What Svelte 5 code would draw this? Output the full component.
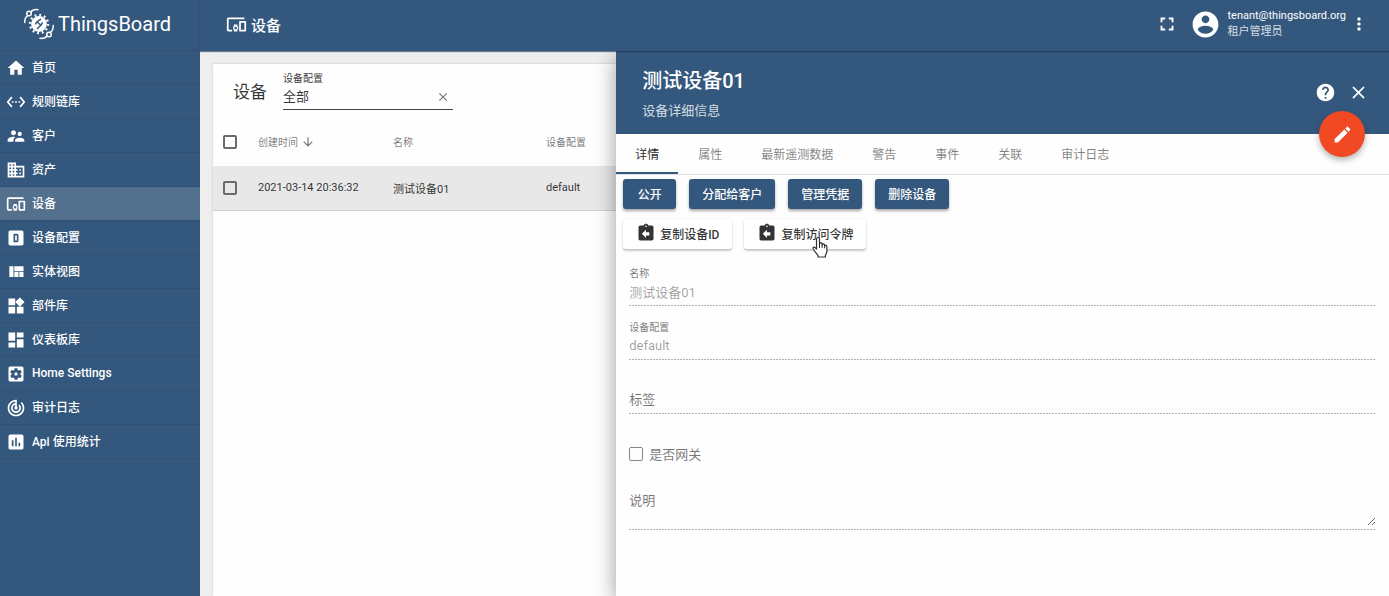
<script>
  const icons = {
    home: 'M10 20v-6h4v6h5v-8h3L12 3 2 12h3v8z',
    chains: 'M7.77 6.76L6.23 5.48.82 12l5.41 6.52 1.54-1.28L3.42 12l4.35-5.24zM7 13h2v-2H7v2zm10-2h-2v2h2v-2zm-6 2h2v-2h-2v2zm6.77-7.52l-1.54 1.28L20.58 12l-4.35 5.24 1.54 1.28L23.18 12l-5.41-6.52z',
    people: 'M16.5 12c1.38 0 2.49-1.12 2.49-2.5S17.88 7 16.5 7C15.12 7 14 8.12 14 9.5s1.12 2.5 2.5 2.5zM9 11c1.66 0 2.99-1.34 2.99-3S10.66 5 9 5C7.34 5 6 6.34 6 8s1.34 3 3 3zm7.5 3c-1.83 0-5.5.92-5.5 2.75V19h11v-2.25c0-1.83-3.67-2.75-5.5-2.75zM9 13c-2.33 0-7 1.17-7 3.5V19h7v-2.25c0-.85.33-2.34 2.37-3.47C10.5 13.1 9.66 13 9 13z',
    domain: 'M12 7V3H2v18h20V7H12zM6 19H4v-2h2v2zm0-4H4v-2h2v2zm0-4H4V9h2v2zm0-4H4V5h2v2zm4 12H8v-2h2v2zm0-4H8v-2h2v2zm0-4H8V9h2v2zm0-4H8V5h2v2zm10 12h-8v-2h2v-2h-2v-2h2v-2h-2V9h8v10zm-2-8h-2v2h2v-2zm0 4h-2v2h2v-2z',
    devices: 'M3 6h18V4H3c-1.1 0-2 .9-2 2v12c0 1.1.9 2 2 2h4v-2H3V6zm10 6H9v1.78c-.61.55-1 1.33-1 2.22s.39 1.67 1 2.22V20h4v-1.78c.61-.55 1-1.34 1-2.22s-.39-1.67-1-2.22V12zm-2 5.5c-.83 0-1.5-.67-1.5-1.5s.67-1.5 1.5-1.5 1.5.67 1.5 1.5-.67 1.5-1.5 1.5zM22 8h-6c-.5 0-1 .5-1 1v10c0 .5.5 1 1 1h6c.5 0 1-.5 1-1V9c0-.5-.5-1-1-1zm-1 10h-4v-8h4v8z',
    profile: 'M9 7v10h4a2 2 0 002-2V9a2 2 0 00-2-2H9zm2 2h2v6h-2V9zM5 3h14a2 2 0 012 2v14a2 2 0 01-2 2H5a2 2 0 01-2-2V5a2 2 0 012-2z',
    quilt: 'M10 18h5v-6h-5v6zm-6 0h5V5H4v13zm12 0h5v-6h-5v6zM10 5v6h11V5H10z',
    widgets: 'M13 13v8h8v-8h-8zM3 21h8v-8H3v8zM3 3v8h8V3H3zm13.66-1.31L11 7.34 16.66 13l5.66-5.66-5.66-5.65z',
    dashboard: 'M3 13h8V3H3v10zm0 8h8v-6H3v6zm10 0h8V11h-8v10zm0-18v6h8V3h-8z',
    settings: 'M12 10c-1.1 0-2 .9-2 2s.9 2 2 2 2-.9 2-2-.9-2-2-2zm7-7H5c-1.11 0-2 .9-2 2v14c0 1.1.89 2 2 2h14c1.11 0 2-.9 2-2V5c0-1.1-.89-2-2-2zm-1.75 9c0 .23-.02.46-.05.68l1.48 1.16c.13.11.17.3.08.45l-1.4 2.42c-.09.15-.27.21-.43.15l-1.74-.7c-.36.28-.76.51-1.18.69l-.26 1.85c-.03.17-.18.3-.35.3h-2.8c-.17 0-.32-.13-.35-.29l-.26-1.85c-.43-.18-.82-.41-1.18-.69l-1.74.7c-.16.06-.34 0-.43-.15l-1.4-2.42c-.09-.15-.05-.34.08-.45l1.48-1.16c-.03-.23-.05-.46-.05-.69 0-.23.02-.46.05-.68l-1.48-1.16c-.13-.11-.17-.3-.08-.45l1.4-2.42c.09-.15.27-.21.43-.15l1.74.7c.36-.28.76-.51 1.18-.69l.26-1.85c.03-.17.18-.3.35-.3h2.8c.17 0 .32.13.35.29l.26 1.85c.43.18.82.41 1.18.69l1.74-.7c.16-.06.34 0 .43.15l1.4 2.42c.09.15.05.34-.08.45l-1.48 1.16c.03.23.05.46.05.69z',
    track: 'M19.07 4.93l-1.41 1.41C19.1 7.79 20 9.79 20 12c0 4.42-3.58 8-8 8s-8-3.58-8-8c0-4.08 3.05-7.44 7-7.93v2.02C8.16 6.57 6 9.03 6 12c0 3.31 2.69 6 6 6s6-2.69 6-6c0-1.66-.67-3.16-1.76-4.24l-1.41 1.41C15.55 9.9 16 10.9 16 12c0 2.21-1.79 4-4 4s-4-1.79-4-4c0-1.86 1.28-3.41 3-3.86v2.14c-.6.35-1 .98-1 1.72 0 1.1.9 2 2 2s2-.9 2-2c0-.74-.4-1.38-1-1.72V2h-1C6.48 2 2 6.48 2 12s4.48 10 10 10 10-4.48 10-10c0-2.76-1.12-5.26-2.93-7.07z',
    chart: 'M19 3H5c-1.1 0-2 .9-2 2v14c0 1.1.9 2 2 2h14c1.1 0 2-.9 2-2V5c0-1.1-.9-2-2-2zM9 17H7v-7h2v7zm4 0h-2V7h2v10zm4 0h-2v-4h2v4z',
    fullscreen: 'M7 14H5v5h5v-2H7v-3zm-2-4h2V7h3V5H5v5zm12 7h-3v2h5v-5h-2v3zM14 5v2h3v3h2V5h-5z',
    account: 'M12 2C6.48 2 2 6.48 2 12s4.48 10 10 10 10-4.48 10-10S17.52 2 12 2zm0 3c1.66 0 3 1.34 3 3s-1.34 3-3 3-3-1.34-3-3 1.34-3 3-3zm0 14.2c-2.5 0-4.71-1.28-6-3.22.03-1.99 4-3.08 6-3.08 1.99 0 5.97 1.09 6 3.08-1.29 1.94-3.5 3.22-6 3.22z',
    more: 'M12 8c1.1 0 2-.9 2-2s-.9-2-2-2-2 .9-2 2 .9 2 2 2zm0 2c-1.1 0-2 .9-2 2s.9 2 2 2 2-.9 2-2-.9-2-2-2zm0 6c-1.1 0-2 .9-2 2s.9 2 2 2 2-.9 2-2-.9-2-2-2z',
    help: 'M12 2C6.48 2 2 6.48 2 12s4.48 10 10 10 10-4.48 10-10S17.52 2 12 2zm1 17h-2v-2h2v2zm2.07-7.75l-.9.92C13.45 12.9 13 13.5 13 15h-2v-.5c0-1.1.45-2.1 1.17-2.83l1.24-1.26c.37-.36.59-.86.59-1.41 0-1.1-.9-2-2-2s-2 .9-2 2H8c0-2.21 1.79-4 4-4s4 1.79 4 4c0 .88-.36 1.68-.93 2.25z',
    close: 'M19 6.41L17.59 5 12 10.59 6.41 5 5 6.41 10.59 12 5 17.59 6.41 19 12 13.41 17.59 19 19 17.59 13.41 12z',
    edit: 'M3 17.25V21h3.75L17.81 9.94l-3.75-3.75L3 17.25zM20.71 7.04c.39-.39.39-1.02 0-1.41l-2.34-2.34c-.39-.39-1.02-.39-1.41 0l-1.83 1.83 3.75 3.75 1.83-1.83z',
    copy: 'M19 3h-4.18C14.4 1.84 13.3 1 12 1c-1.3 0-2.4.84-2.82 2H5c-1.1 0-2 .9-2 2v14c0 1.1.9 2 2 2h14c1.1 0 2-.9 2-2V5c0-1.1-.9-2-2-2zm-7 0c.55 0 1 .45 1 1s-.45 1-1 1-1-.45-1-1 .45-1 1-1zm4 12h-4v3l-5-5 5-5v3h4v4z',
    down: 'M20 12l-1.41-1.41L13 16.17V4h-2v12.17l-5.58-5.59L4 12l8 8 8-8z'
  };

  const menu = [
    ['首页', 'home'],
    ['规则链库', 'chains'],
    ['客户', 'people'],
    ['资产', 'domain'],
    ['设备', 'devices'],
    ['设备配置', 'profile'],
    ['实体视图', 'quilt'],
    ['部件库', 'widgets'],
    ['仪表板库', 'dashboard'],
    ['Home Settings', 'settings'],
    ['审计日志', 'track'],
    ['Api 使用统计', 'chart']
  ];
  const tabs = ['详情', '属性', '最新遥测数据', '警告', '事件', '关联', '审计日志'];
  const actions = ['公开', '分配给客户', '管理凭据', '删除设备'];

  let activeMenu = $state('设备');
  let activeTab = $state('详情');
  let profileFilter = $state('全部');
</script>

{#snippet icon(name, size)}
  <svg class="icon" width={size} height={size} viewBox="0 0 24 24" aria-hidden="true">
    <path d={icons[name]} fill="currentColor" fill-rule={name === 'profile' ? 'evenodd' : 'nonzero'} />
  </svg>
{/snippet}

<div class="shell">
  <aside class="sidebar">
    <a class="brand" href="#home">
      <svg class="icon" width="32" height="32" viewBox="0 0 32 32" fill="none" stroke="currentColor" aria-hidden="true">
        <g stroke-width="1.5" stroke-linecap="round">
          <circle cx="6" cy="5.5" r="2.3" />
          <path d="M8 4C9.500 1.500 11.500 1.300 15 1.700M4.800 7.600C2.300 9 1.700 11 1.700 14.500" />
          <circle cx="26" cy="26.500" r="2.300" />
          <path d="M24 28C22.500 30.500 20.500 30.700 17 30.300M27.200 24.400C29.700 23 30.300 21 30.300 17.500" />
        </g>
        <circle cx="16" cy="16" r="9" stroke-width="2.400" stroke-dasharray="1.800 2.912" />
        <circle cx="16" cy="16" r="7.900" fill="currentColor" stroke="none" />
        <path d="M17.500 11.300l-3.600 2.500 3.900 3.500-3.300 3.200M13.900 13.800l-1.200 2M17.800 17.300l1.400-2.300" stroke="#34587d" stroke-width="1.500" stroke-linecap="round" stroke-linejoin="round" />
      </svg>
      <span>ThingsBoard</span>
    </a>
    <nav>
      {#each menu as [label, name]}
        <a href="#{name}" class:active={activeMenu === label} onclick={() => (activeMenu = label)}>
          {@render icon(name, 20)}
          <span>{label}</span>
        </a>
      {/each}
    </nav>
  </aside>

  <div class="main">
    <header class="topbar">
      <h1>{@render icon('devices', 21)}<span>设备</span></h1>
      <button class="plain" aria-label="全屏">{@render icon('fullscreen', 22)}</button>
      <div class="user">
        {@render icon('account', 31)}
        <div>
          <div>tenant@thingsboard.org</div>
          <div class="role">租户管理员</div>
        </div>
      </div>
      <button class="plain" aria-label="更多">{@render icon('more', 20)}</button>
    </header>

    <div class="content">
      <section class="card">
        <div class="toolbar">
          <h2>设备</h2>
          <div class="filter">
            <label for="filter">设备配置</label>
            <div class="filter-row">
              <input id="filter" type="text" bind:value={profileFilter} />
              <button class="plain" aria-label="清除" onclick={() => (profileFilter = '')}>{@render icon('close', 14)}</button>
            </div>
          </div>
        </div>
        <table>
          <colgroup><col class="c-check" /><col class="c-time" /><col class="c-name" /><col /></colgroup>
          <thead>
            <tr>
              <th><input type="checkbox" aria-label="全选" /></th>
              <th><span class="sorted">创建时间 {@render icon('down', 14)}</span></th>
              <th>名称</th>
              <th>设备配置</th>
            </tr>
          </thead>
          <tbody>
            <tr>
              <td><input type="checkbox" aria-label="选择 测试设备01" /></td>
              <td>2021-03-14 20:36:32</td>
              <td>测试设备01</td>
              <td>default</td>
            </tr>
          </tbody>
        </table>
      </section>

      <section class="drawer">
        <header class="drawer-head">
          <div class="titles">
            <h2>测试设备01</h2>
            <p>设备详细信息</p>
          </div>
          <button class="plain" aria-label="帮助">{@render icon('help', 21)}</button>
          <button class="plain" aria-label="关闭">{@render icon('close', 21)}</button>
          <button class="fab" aria-label="编辑">{@render icon('edit', 21)}</button>
        </header>
        <div class="tabs" role="tablist">
          {#each tabs as tab}
            <button role="tab" aria-selected={activeTab === tab} onclick={() => (activeTab = tab)}>{tab}</button>
          {/each}
        </div>
        <div class="actions">
          {#each actions as action}
            <button class="raised primary">{action}</button>
          {/each}
        </div>
        <div class="actions second">
          <button class="raised">{@render icon('copy', 20)}<span>复制设备ID</span></button>
          <button class="raised">
            {@render icon('copy', 20)}<span>复制访问令牌</span>
            <svg class="pointer" width="16" height="22" viewBox="0 0 16 22" aria-hidden="true">
              <path d="M4.500 13V3a1.500 1.500 0 013 0v5.500V7.800a1.400 1.400 0 012.600 0v1.500-.600a1.300 1.300 0 012.500.200v1.200a1.200 1.200 0 012.300.400V15c0 2-1 3-1.500 4.500V21H6v-1.500C4.500 18 2.500 15 1.200 12.800c-.7-1.400 1-2.300 2-1.200z" fill="#fff" stroke="#333" stroke-width="1.200" stroke-linejoin="round" />
              <path d="M7.500 8.500V12M10.100 9.300V12M12.600 10V12.300" fill="none" stroke="#333" />
            </svg>
          </button>
        </div>
        <form>
          <div class="field">
            <label for="name">名称</label>
            <input id="name" type="text" value="测试设备01" disabled />
          </div>
          <div class="field">
            <label for="profile">设备配置</label>
            <input id="profile" type="text" value="default" disabled />
          </div>
          <div class="field empty">
            <label for="tag">标签</label>
            <input id="tag" type="text" disabled />
          </div>
          <div class="gateway">
            <input id="gateway" type="checkbox" disabled />
            <label for="gateway">是否网关</label>
          </div>
          <div class="field empty area">
            <label for="description">说明</label>
            <textarea id="description" disabled></textarea>
          </div>
        </form>
      </section>
    </div>
  </div>
</div>

<style>
  :global(body) {
    background: #eee;
  }
  .shell {
    --primary: #34587d;
    display: grid;
    grid-template-columns: 200px minmax(0, 1fr);
    min-height: 100vh;
    font-family: Roboto, 'Noto Sans CJK SC', sans-serif;
    font-size: 12px;
    color: rgba(0, 0, 0, 0.8);
  }
  .shell :is(*) {
    box-sizing: border-box;
  }
  h1, h2, p {
    margin: 0;
    font-weight: 400;
  }
  button, input, textarea {
    font: inherit;
    color: inherit;
    margin: 0;
    padding: 0;
    border: 0;
    border-radius: 0;
    background: none;
  }
  button {
    cursor: pointer;
  }
  .icon {
    display: block;
    flex: none;
  }
  .plain {
    display: grid;
    place-items: center;
  }

  .sidebar {
    background: var(--primary);
    color: #fff;
    z-index: 2;
  }
  .brand {
    display: flex;
    align-items: center;
    gap: 3px;
    height: 51px;
    padding: 0 23px 3px;
    border-bottom: 1px solid #2f5176;
    color: #fff;
    font-size: 20px;
    text-decoration: none;
  }
  nav a {
    display: flex;
    align-items: center;
    gap: 6px;
    height: 34px;
    padding: 0 6px;
    border-bottom: 1px solid #2f5176;
    color: #fff;
    font-weight: 500;
    text-decoration: none;
  }
  nav span {
    padding-bottom: 2px;
  }
  nav a.active {
    background: #53718d;
  }

  .main {
    display: flex;
    flex-direction: column;
    min-width: 0;
  }
  .topbar {
    display: flex;
    align-items: center;
    height: 51px;
    padding: 0 20px 3px 26px;
    background: var(--primary);
    color: #fff;
    box-shadow: 0 1px 1px rgba(20, 45, 75, 0.6);
    z-index: 3;
  }
  .topbar h1 {
    display: flex;
    align-items: center;
    gap: 4px;
    margin-right: auto;
    font-size: 15px;
    font-weight: 500;
  }
  .user {
    display: flex;
    align-items: center;
    gap: 6px;
    margin: 0 7px 0 12px;
    font-size: 11px;
    line-height: 16px;
  }
  .role {
    color: rgba(255, 255, 255, 0.8);
  }
  .user + .plain {
    margin-left: -4px;
  }

  .content {
    position: relative;
    display: flex;
    flex: 1;
    padding: 13px 13px 0;
    background: #eee;
    overflow: hidden;
  }
  .card {
    flex: 1;
    background: #fefefe;
    box-shadow: 0 0 2px rgba(0, 0, 0, 0.2);
  }
  .toolbar {
    display: flex;
    align-items: center;
    gap: 16px;
    height: 53px;
    padding: 0 20px;
  }
  .toolbar h2 {
    font-size: 17px;
  }
  .filter {
    width: 170px;
  }
  .filter label {
    display: block;
    font-size: 10px;
    line-height: 13px;
  }
  .filter-row {
    display: flex;
    height: 25px;
    padding-right: 3px;
    border-bottom: 1px solid #444;
  }
  .filter-row input {
    flex: 1;
    min-width: 0;
    padding-bottom: 2px;
    font-size: 13px;
  }
  .filter-row button {
    color: #777;
  }
  table {
    width: 100%;
    border-collapse: collapse;
    table-layout: fixed;
    text-align: left;
    font-size: 11px;
  }
  .c-check { width: 45px; }
  .c-time { width: 135px; }
  .c-name { width: 153px; }
  th {
    height: 49px;
    padding: 0;
    font-size: 10px;
    font-weight: 400;
    color: rgba(0, 0, 0, 0.54);
  }
  td {
    height: 44px;
    padding: 0;
    border-bottom: 1px solid #d0d0d0;
    background: #e8e8e8;
  }
  .sorted {
    display: flex;
    align-items: center;
    gap: 3px;
  }
  input[type='checkbox'] {
    appearance: none;
    display: block;
    width: 14px;
    height: 14px;
    border: 2px solid #6b6b6b;
    border-radius: 2px;
  }
  table input[type='checkbox'] {
    margin-left: 10px;
  }

  .drawer {
    position: absolute;
    inset: 0 0 0 auto;
    width: 65%;
    background: #fefefe;
    box-shadow: 0 6px 20px rgba(0, 0, 0, 0.4);
  }
  .drawer-head {
    position: relative;
    display: flex;
    align-items: center;
    gap: 12px;
    height: 83px;
    padding: 0 20px 0 26px;
    background: var(--primary);
    color: #fff;
  }
  .titles {
    margin-right: auto;
    padding-top: 6px;
  }
  .titles h2 {
    font-size: 20px;
    line-height: 30px;
    font-weight: 500;
  }
  .titles p {
    font-size: 13px;
    line-height: 30px;
    color: rgba(255, 255, 255, 0.8);
  }
  .fab {
    position: absolute;
    right: 24px;
    bottom: -23px;
    display: grid;
    place-items: center;
    width: 46px;
    height: 46px;
    border-radius: 50%;
    background: #f04923;
    box-shadow: 0 3px 6px rgba(0, 0, 0, 0.3);
  }
  .tabs {
    display: flex;
    gap: 1px;
    height: 41px;
    border-bottom: 1px solid #e4e4e4;
  }
  .tabs button {
    padding: 0 19px;
    border-bottom: 2px solid transparent;
    color: rgba(0, 0, 0, 0.5);
  }
  .tabs button[aria-selected='true'] {
    border-color: var(--primary);
    color: rgba(0, 0, 0, 0.87);
  }
  .actions {
    display: flex;
    gap: 13px;
    padding: 4px 7px 0;
  }
  .actions.second {
    gap: 12px;
    padding-top: 10px;
  }
  .raised {
    position: relative;
    display: flex;
    align-items: center;
    justify-content: center;
    gap: 4px;
    min-width: 53px;
    height: 30px;
    padding: 0 13px 2px;
    border-radius: 3px;
    background: #fff;
    font-weight: 500;
    box-shadow: 0 2px 2px rgba(0, 0, 0, 0.2), 0 0 2px rgba(0, 0, 0, 0.1);
  }
  .primary {
    background: var(--primary);
    color: #fff;
    box-shadow: 0 2px 3px rgba(0, 0, 0, 0.35);
  }
  .pointer {
    position: absolute;
    left: 68px;
    top: 17px;
  }

  form {
    padding: 3px 13px;
    font-size: 13px;
    color: rgba(0, 0, 0, 0.55);
  }
  .field {
    display: grid;
    grid-template-rows: 13px 26px;
    padding: 14px 0 1px;
    background: repeating-linear-gradient(to right, #b4b4b4 0 2px, transparent 2px 3px) bottom / 100% 1px no-repeat;
  }
  .field label {
    grid-area: 1 / 1;
    font-size: 10px;
    line-height: 15px;
  }
  .field input, .field textarea {
    grid-area: 2 / 1;
    width: 100%;
    padding-bottom: 2px;
    color: rgba(0, 0, 0, 0.38);
  }
  .field.empty label {
    grid-area: 2 / 1;
    font-size: 13px;
    line-height: 26px;
  }
  .gateway {
    display: flex;
    align-items: center;
    gap: 6px;
    height: 40px;
    margin-top: 20px;
  }
  .gateway label {
    padding-bottom: 2px;
  }
  .gateway input[type='checkbox'] {
    border-width: 1px;
    border-color: #888;
  }
  .area {
    grid-template-rows: 0 38px;
    padding-bottom: 4px;
  }
  .field textarea {
    height: 38px;
    resize: vertical;
  }
</style>
